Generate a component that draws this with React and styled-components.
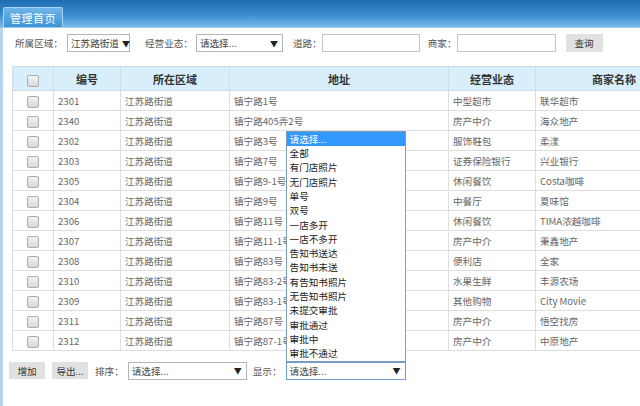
import React from 'react';
import styled, { createGlobalStyle } from 'styled-components';

const GlobalStyle = createGlobalStyle`
  html, body {
    margin: 0;
    padding: 0;
    background: #fff;
    overflow: hidden;
  }
  body {
    font-family: "Noto Sans CJK SC", "Noto Sans", sans-serif;
    font-size: 9.6px;
    color: #555;
  }
`;

const Page = styled.div`
  width: 640px;
  height: 406px;
  display: flex;
  flex-direction: column;
  overflow: hidden;
`;

const TopBar = styled.div`
  height: 27px;
  flex-shrink: 0;
  display: flex;
  align-items: flex-end;
  padding-left: 3px;
  background: linear-gradient(to bottom, #1e6db0 0%, #3a8ccf 55%, #7ab9e8 100%);
  border-bottom: 1px solid #9cc8ec;
`;

const Tab = styled.div`
  height: 20px;
  width: 60px;
  display: flex;
  align-items: center;
  justify-content: center;
  color: #fff;
  font-size: 11px;
  letter-spacing: 0.5px;
  border: 1px solid #a9d3f3;
  border-bottom: none;
  border-radius: 2px 2px 0 0;
  background: linear-gradient(to bottom, #6fb6ea, #3e93d6);
  box-sizing: border-box;
`;

const Main = styled.div`
  flex: 1;
  border-left: 3px solid #b7d4ee;
  display: flex;
  flex-direction: column;
`;

const FilterBar = styled.div`
  display: flex;
  align-items: center;
  height: 18px;
  margin-top: 6px;
  padding-left: 12px;
  white-space: nowrap;
`;

const Label = styled.span`
  color: #555;
  margin-right: ${p => p.$gap ?? 3}px;
  margin-left: ${p => p.$before || 0}px;
`;

const SelectBox = styled.div`
  position: relative;
  box-sizing: border-box;
  width: ${p => p.$w}px;
  height: 18px;
  border: 1px solid ${p => (p.$focus ? '#6f9bd8' : '#b5b5b5')};
  background: #fff;
  display: flex;
  align-items: center;
  justify-content: space-between;
  gap: 3px;
  padding: 0 4px 0 3px;
  color: #444;
`;

const Arrow = styled.span`
  font-size: 8px;
  color: #222;
`;

const TextInput = styled.div`
  box-sizing: border-box;
  width: ${p => p.$w}px;
  height: 18px;
  border: 1px solid #c4c4c4;
  background: #fff;
`;

const Button = styled.div`
  box-sizing: border-box;
  width: ${p => p.$w}px;
  height: ${p => p.$h || 17}px;
  display: flex;
  align-items: center;
  justify-content: center;
  background: #e1e1e1;
  color: #333;
  margin-left: ${p => p.$before || 0}px;
`;

const TableWrap = styled.div`
  margin-top: 14px;
  padding-left: 9px;
`;

const Table = styled.table`
  border-collapse: collapse;
  table-layout: fixed;
  width: 680px;
`;

const Th = styled.th`
  height: 23px;
  padding: 0;
  background: #d8effb;
  border: 1px solid #cfdde6;
  color: #333;
  font-size: 11px;
  font-weight: bold;
  text-align: center;
`;

const Td = styled.td`
  height: 19px;
  padding: 0 4px;
  border: 1px solid #dedede;
  color: #666;
  white-space: nowrap;
  overflow: hidden;
  text-align: ${p => (p.$center ? 'center' : 'left')};
`;

const Check = styled.span`
  display: inline-block;
  width: 10px;
  height: 10px;
  border: 1px solid #adadad;
  border-radius: 2px;
  background: linear-gradient(to bottom, #f4f4f4, #d8d8d8);
  vertical-align: middle;
`;

const BottomBar = styled.div`
  display: flex;
  align-items: center;
  height: 17px;
  margin-top: 11px;
  padding-left: 6px;
  white-space: nowrap;
`;

const DropAnchor = styled.div`
  position: relative;
`;

const DropList = styled.ul`
  position: absolute;
  left: 0;
  bottom: 100%;
  width: 120px;
  margin: 0;
  padding: 0;
  list-style: none;
  box-sizing: border-box;
  border: 1px solid #7f9db9;
  background: #fff;
  z-index: 5;
`;

const DropItem = styled.li`
  height: 14.3px;
  line-height: 14.3px;
  padding-left: 3px;
  color: ${p => (p.$active ? '#fff' : '#222')};
  background: ${p => (p.$active ? '#3399ff' : 'transparent')};
`;

const rows = [
  ['2301', '江苏路街道', '镇宁路1号', '中型超市', '联华超市'],
  ['2340', '江苏路街道', '镇宁路405弄2号', '房产中介', '海众地产'],
  ['2302', '江苏路街道', '镇宁路3号', '服饰鞋包', '柔漾'],
  ['2303', '江苏路街道', '镇宁路7号', '证券保险银行', '兴业银行'],
  ['2305', '江苏路街道', '镇宁路9-1号', '休闲餐饮', 'Costa咖啡'],
  ['2304', '江苏路街道', '镇宁路9号', '中餐厅', '夏味馆'],
  ['2306', '江苏路街道', '镇宁路11号', '休闲餐饮', 'TIMA浓越咖啡'],
  ['2307', '江苏路街道', '镇宁路11-1号', '房产中介', '秉鑫地产'],
  ['2308', '江苏路街道', '镇宁路83号', '便利店', '全家'],
  ['2310', '江苏路街道', '镇宁路83-2号', '水果生鲜', '丰源农场'],
  ['2309', '江苏路街道', '镇宁路83-1号', '其他购物', 'City Movie'],
  ['2311', '江苏路街道', '镇宁路87号', '房产中介', '悟空找房'],
  ['2312', '江苏路街道', '镇宁路87-1号', '房产中介', '中原地产'],
];

const options = [
  '请选择...', '全部', '有门店照片', '无门店照片', '单号', '双号', '一店多开', '一店不多开',
  '告知书送达', '告知书未送', '有告知书照片', '无告知书照片', '未提交审批', '审批通过', '审批中', '审批不通过',
];

const App = () => (
  <Page>
    <GlobalStyle />
    <TopBar>
      <Tab>管理首页</Tab>
    </TopBar>
    <Main>
      <FilterBar>
        <Label $gap={4}>所属区域：</Label>
        <SelectBox $w={63}>江苏路街道<Arrow>▼</Arrow></SelectBox>
        <Label $before={15} $gap={3}>经营业态：</Label>
        <SelectBox $w={87}>请选择...<Arrow>▼</Arrow></SelectBox>
        <Label $before={10} $gap={0}>道路：</Label>
        <TextInput $w={98} />
        <Label $before={8} $gap={0}>商家：</Label>
        <TextInput $w={99} />
        <Button $before={10} $h={18} $w={37}>查询</Button>
      </FilterBar>
      <TableWrap>
        <Table>
          <colgroup>
            <col style={{ width: 41 }} />
            <col style={{ width: 67 }} />
            <col style={{ width: 109 }} />
            <col style={{ width: 219 }} />
            <col style={{ width: 87 }} />
            <col style={{ width: 157 }} />
          </colgroup>
          <thead>
            <tr>
              <Th><Check /></Th>
              <Th>编号</Th>
              <Th>所在区域</Th>
              <Th>地址</Th>
              <Th>经营业态</Th>
              <Th>商家名称</Th>
            </tr>
          </thead>
          <tbody>
            {rows.map(r => (
              <tr key={r[0]}>
                <Td $center><Check /></Td>
                {r.map((c, i) => <Td key={i}>{c}</Td>)}
              </tr>
            ))}
          </tbody>
        </Table>
      </TableWrap>
      <BottomBar>
        <Button $w={36}>增加</Button>
        <Button $before={7} $w={36}>导出...</Button>
        <Label $before={7} $gap={4}>排序：</Label>
        <SelectBox $w={119}>请选择...<Arrow>▼</Arrow></SelectBox>
        <Label $before={6} $gap={4}>显示：</Label>
        <DropAnchor>
          <DropList>
            {options.map((o, i) => <DropItem key={o} $active={i === 0}>{o}</DropItem>)}
          </DropList>
          <SelectBox $w={120} $focus>请选择...<Arrow>▼</Arrow></SelectBox>
        </DropAnchor>
      </BottomBar>
    </Main>
  </Page>
);

export default App;
